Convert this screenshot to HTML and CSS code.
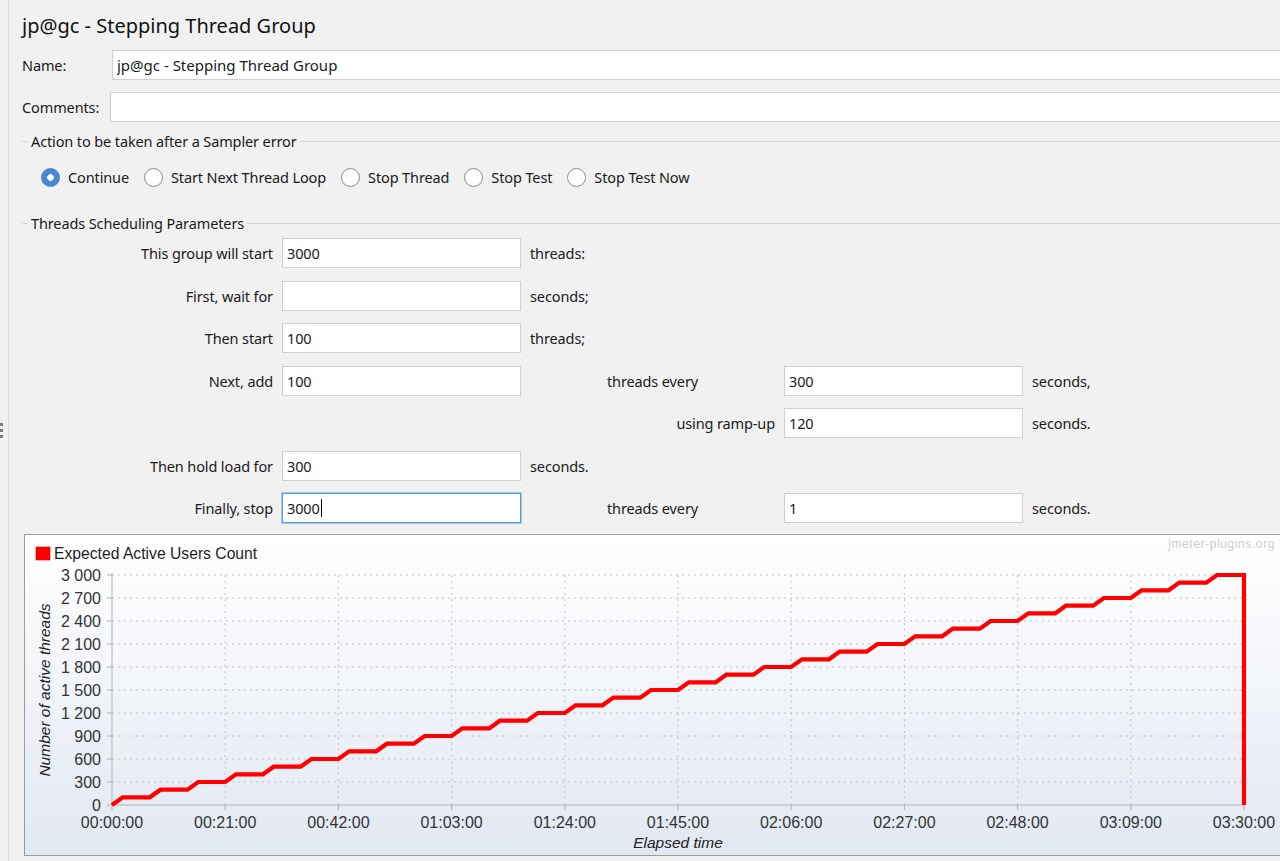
FILE: index.html
```html
<!DOCTYPE html>
<html>
<head>
<meta charset="utf-8">
<title>jp@gc - Stepping Thread Group</title>
<link rel="stylesheet" href="styles.css">
</head>
<body>
<div class="app">
  <div class="splitter"><span class="grip"></span></div>
  <main class="panel">
    <h1 class="title">jp@gc - Stepping Thread Group</h1>

    <div class="row row-name">
      <span class="row-label name-label">Name:</span>
      <input class="text-field" type="text" value="jp@gc - Stepping Thread Group">
    </div>
    <div class="row row-comments">
      <span class="row-label comments-label">Comments:</span>
      <input class="text-field" type="text" value="">
    </div>

    <div class="legend legend-action">Action to be taken after a Sampler error</div>
    <div class="radios">
      <label class="radio"><span class="dot checked"></span>Continue</label>
      <label class="radio"><span class="dot"></span>Start Next Thread Loop</label>
      <label class="radio"><span class="dot"></span>Stop Thread</label>
      <label class="radio"><span class="dot"></span>Stop Test</label>
      <label class="radio"><span class="dot"></span>Stop Test Now</label>
    </div>

    <div class="legend legend-threads">Threads Scheduling Parameters</div>
    <div class="params">
      <span class="lbl c1">This group will start</span>
      <input class="field c2" type="text" value="3000">
      <span class="txt c3">threads:</span>

      <span class="lbl c1">First, wait for</span>
      <input class="field c2" type="text" value="">
      <span class="txt c3">seconds;</span>

      <span class="lbl c1">Then start</span>
      <input class="field c2" type="text" value="100">
      <span class="txt c3">threads;</span>

      <span class="lbl c1">Next, add</span>
      <input class="field c2" type="text" value="100">
      <span class="txt mid c3">threads every</span>
      <input class="field c4" type="text" value="300">
      <span class="txt c5">seconds,</span>

      <span class="lbl c3">using ramp-up</span>
      <input class="field c4" type="text" value="120">
      <span class="txt c5">seconds.</span>

      <span class="lbl c1">Then hold load for</span>
      <input class="field c2" type="text" value="300">
      <span class="txt c3">seconds.</span>

      <span class="lbl c1">Finally, stop</span>
      <div class="field focused c2"><span>3000</span><span class="caret"></span></div>
      <span class="txt mid c3">threads every</span>
      <input class="field c4" type="text" value="1">
      <span class="txt c5">seconds.</span>
    </div>

    <div class="chart">
      <svg width="1260" height="320" viewBox="0 0 1260 320" xmlns="http://www.w3.org/2000/svg">
        <g transform="translate(-25,-535)">
          <rect x="36" y="547" width="14" height="13" fill="#ff0000" stroke="#d00000" stroke-width="0.6"/>
          <text class="legend-text" x="54" y="559">Expected Active Users Count</text>
          <text class="watermark" x="1275" y="548" text-anchor="end">jmeter-plugins.org</text>

          <g class="grid">
            <line x1="112" y1="575" x2="1244" y2="575"/>
            <line x1="112" y1="598" x2="1244" y2="598"/>
            <line x1="112" y1="621" x2="1244" y2="621"/>
            <line x1="112" y1="644" x2="1244" y2="644"/>
            <line x1="112" y1="667" x2="1244" y2="667"/>
            <line x1="112" y1="690" x2="1244" y2="690"/>
            <line x1="112" y1="713" x2="1244" y2="713"/>
            <line x1="112" y1="736" x2="1244" y2="736"/>
            <line x1="112" y1="759" x2="1244" y2="759"/>
            <line x1="112" y1="782" x2="1244" y2="782"/>
            <line x1="225.2" y1="575" x2="225.2" y2="805"/>
            <line x1="338.4" y1="575" x2="338.4" y2="805"/>
            <line x1="451.6" y1="575" x2="451.6" y2="805"/>
            <line x1="564.8" y1="575" x2="564.8" y2="805"/>
            <line x1="678" y1="575" x2="678" y2="805"/>
            <line x1="791.2" y1="575" x2="791.2" y2="805"/>
            <line x1="904.4" y1="575" x2="904.4" y2="805"/>
            <line x1="1017.6" y1="575" x2="1017.6" y2="805"/>
            <line x1="1130.8" y1="575" x2="1130.8" y2="805"/>
          </g>

          <g class="axis">
            <line x1="112" y1="573" x2="112" y2="805"/>
            <line x1="112" y1="805" x2="1244" y2="805"/>
            <line x1="107" y1="575" x2="112" y2="575"/>
            <line x1="107" y1="598" x2="112" y2="598"/>
            <line x1="107" y1="621" x2="112" y2="621"/>
            <line x1="107" y1="644" x2="112" y2="644"/>
            <line x1="107" y1="667" x2="112" y2="667"/>
            <line x1="107" y1="690" x2="112" y2="690"/>
            <line x1="107" y1="713" x2="112" y2="713"/>
            <line x1="107" y1="736" x2="112" y2="736"/>
            <line x1="107" y1="759" x2="112" y2="759"/>
            <line x1="107" y1="782" x2="112" y2="782"/>
            <line x1="107" y1="805" x2="112" y2="805"/>
            <line x1="112" y1="805" x2="112" y2="810"/>
            <line x1="225.2" y1="805" x2="225.2" y2="810"/>
            <line x1="338.4" y1="805" x2="338.4" y2="810"/>
            <line x1="451.6" y1="805" x2="451.6" y2="810"/>
            <line x1="564.8" y1="805" x2="564.8" y2="810"/>
            <line x1="678" y1="805" x2="678" y2="810"/>
            <line x1="791.2" y1="805" x2="791.2" y2="810"/>
            <line x1="904.4" y1="805" x2="904.4" y2="810"/>
            <line x1="1017.6" y1="805" x2="1017.6" y2="810"/>
            <line x1="1130.8" y1="805" x2="1130.8" y2="810"/>
            <line x1="1244" y1="805" x2="1244" y2="810"/>
          </g>

          <g class="ticks ytick" text-anchor="end">
            <text x="101" y="581">3 000</text>
            <text x="101" y="604">2 700</text>
            <text x="101" y="627">2 400</text>
            <text x="101" y="650">2 100</text>
            <text x="101" y="673">1 800</text>
            <text x="101" y="696">1 500</text>
            <text x="101" y="719">1 200</text>
            <text x="101" y="742">900</text>
            <text x="101" y="765">600</text>
            <text x="101" y="788">300</text>
            <text x="101" y="811">0</text>
          </g>
          <g class="ticks xtick" text-anchor="middle">
            <text x="112" y="828">00:00:00</text>
            <text x="225.2" y="828">00:21:00</text>
            <text x="338.4" y="828">00:42:00</text>
            <text x="451.6" y="828">01:03:00</text>
            <text x="564.8" y="828">01:24:00</text>
            <text x="678" y="828">01:45:00</text>
            <text x="791.2" y="828">02:06:00</text>
            <text x="904.4" y="828">02:27:00</text>
            <text x="1017.6" y="828">02:48:00</text>
            <text x="1130.8" y="828">03:09:00</text>
            <text x="1244" y="828">03:30:00</text>
          </g>

          <text class="axis-title" x="0" y="0" text-anchor="middle" transform="translate(50,690) rotate(-90)">Number of active threads</text>
          <text class="axis-title" x="678" y="848" text-anchor="middle">Elapsed time</text>

          <path class="series" d="M112,805l10.781-7.667h26.952l10.781-7.667h26.952l10.781-7.667h26.952l10.781-7.667h26.952l10.781-7.667h26.952l10.781-7.667h26.952l10.781-7.667h26.952l10.781-7.667h26.952l10.781-7.667h26.952l10.781-7.667h26.952l10.781-7.667h26.952l10.781-7.667h26.952l10.781-7.667h26.952l10.781-7.667h26.952l10.781-7.667h26.952l10.781-7.667h26.952l10.781-7.667h26.952l10.781-7.667h26.952l10.781-7.667h26.952l10.781-7.667h26.952l10.781-7.667h26.952l10.781-7.667h26.952l10.781-7.667h26.952l10.781-7.667h26.952l10.781-7.667h26.952l10.781-7.667h26.952l10.781-7.667h26.952l10.781-7.667h26.952l10.781-7.667h26.952l10.781-7.667h26.952V805"/>
        </g>
      </svg>
    </div>
  </main>
</div>
</body>
</html>
```

FILE: styles.css
```css
* { box-sizing: border-box; }

html, body {
  margin: 0;
  height: 100%;
}

body {
  background: #f1f1f1;
  font-family: "Noto Sans", "Open Sans", sans-serif;
  font-size: 14.5px;
  letter-spacing: -0.12px;
  color: #1a1a1a;
  overflow: hidden;
}

.app {
  display: flex;
  height: 861px;
}

.splitter {
  flex: none;
  width: 9px;
  display: flex;
  align-items: center;
  border-right: 1px solid #dcdcdc;
}

.grip {
  width: 3px;
  height: 15px;
  background: repeating-linear-gradient(to bottom, #7c7c7c 0 3px, transparent 3px 6px);
}

.panel {
  flex: 1;
  min-width: 0;
  padding: 14px 0 0 13px;
  overflow: hidden;
}

.title {
  margin: 0 0 12px;
  font-size: 20px;
  line-height: 24px;
  font-weight: normal;
  letter-spacing: 0;
  color: #111;
}

.row {
  display: flex;
  align-items: center;
}

.row-name { margin-bottom: 12px; }
.row-comments { margin-bottom: 10px; }

.row-label { flex: none; }
.name-label { width: 90px; }
.comments-label { width: 88px; }

.text-field {
  flex: 1;
  height: 30px;
  margin-right: -20px;
  padding: 0 4px;
  border: 1px solid #cfcfcf;
  background: #fff;
  font: inherit;
  font-size: 15px;
  letter-spacing: 0;
  color: inherit;
  outline: none;
}

.legend {
  display: flex;
  align-items: center;
  gap: 3px;
  line-height: 18px;
}

.legend::before {
  content: "";
  width: 6px;
  border-top: 1px solid #d6d6d6;
}

.legend::after {
  content: "";
  flex: 1;
  border-top: 1px solid #d6d6d6;
}

.legend-threads { margin-top: 27px; }

.radios {
  display: flex;
  align-items: center;
  gap: 15px;
  height: 20px;
  margin-top: 17px;
  padding-left: 19px;
}

.radio {
  display: flex;
  align-items: center;
  gap: 8px;
}

.dot {
  width: 19px;
  height: 19px;
  border-radius: 50%;
  border: 1px solid #8c8c8c;
  background: #fff;
}

.dot.checked {
  border-color: #3f7fc9;
  background: radial-gradient(circle, #fff 0 3px, #4a88cf 3.6px);
}

.params {
  display: grid;
  grid-template-columns: 243px 239px 245px 239px auto;
  grid-auto-rows: 30px;
  column-gap: 9px;
  row-gap: 12.5px;
  margin: 6px 0 0 8px;
}

.c1 { grid-column: 1; }
.c2 { grid-column: 2; }
.c3 { grid-column: 3; }
.c4 { grid-column: 4; }
.c5 { grid-column: 5; }

.lbl {
  align-self: center;
  justify-self: end;
  white-space: nowrap;
}

.txt {
  align-self: center;
  white-space: nowrap;
}

.txt.mid { justify-self: center; }

.field {
  height: 30px;
  padding: 0 4px;
  border: 1px solid #cfcfcf;
  background: #fff;
  font: inherit;
  letter-spacing: inherit;
  color: inherit;
  outline: none;
}

.field.focused {
  display: flex;
  align-items: center;
  border-color: #5d9ad8;
  box-shadow: 0 0 0 1px #a8c8ec;
}

.caret {
  width: 1px;
  height: 18px;
  margin-left: 1px;
  background: #000;
}

.chart {
  width: 1262px;
  height: 322px;
  margin: 11px 0 0 2px;
  border: 1px solid #9c9c9c;
  background: linear-gradient(#ffffff, #e2e8f2);
}

.chart svg { display: block; }

.legend-text {
  font-family: "Liberation Sans", Arial, sans-serif;
  font-size: 15.7px;
  letter-spacing: 0;
  fill: #1e1e1e;
}

.watermark {
  font-family: "Liberation Sans", Arial, sans-serif;
  font-size: 12px;
  letter-spacing: 0.6px;
  fill: #cdcdcd;
}

.grid line {
  stroke: #c2c2c2;
  stroke-width: 1;
  stroke-dasharray: 2 4;
}

.axis line {
  stroke: #b0b0b0;
  stroke-width: 1;
}

.ticks text {
  font-family: "Liberation Sans", Arial, sans-serif;
  font-size: 16px;
  letter-spacing: 0;
  fill: #333;
}

.axis-title {
  font-family: "Liberation Sans", Arial, sans-serif;
  font-size: 15.5px;
  font-style: italic;
  letter-spacing: 0;
  fill: #222;
}

.series {
  fill: none;
  stroke: #ff0000;
  stroke-width: 4.2;
  stroke-linejoin: miter;
}
```
